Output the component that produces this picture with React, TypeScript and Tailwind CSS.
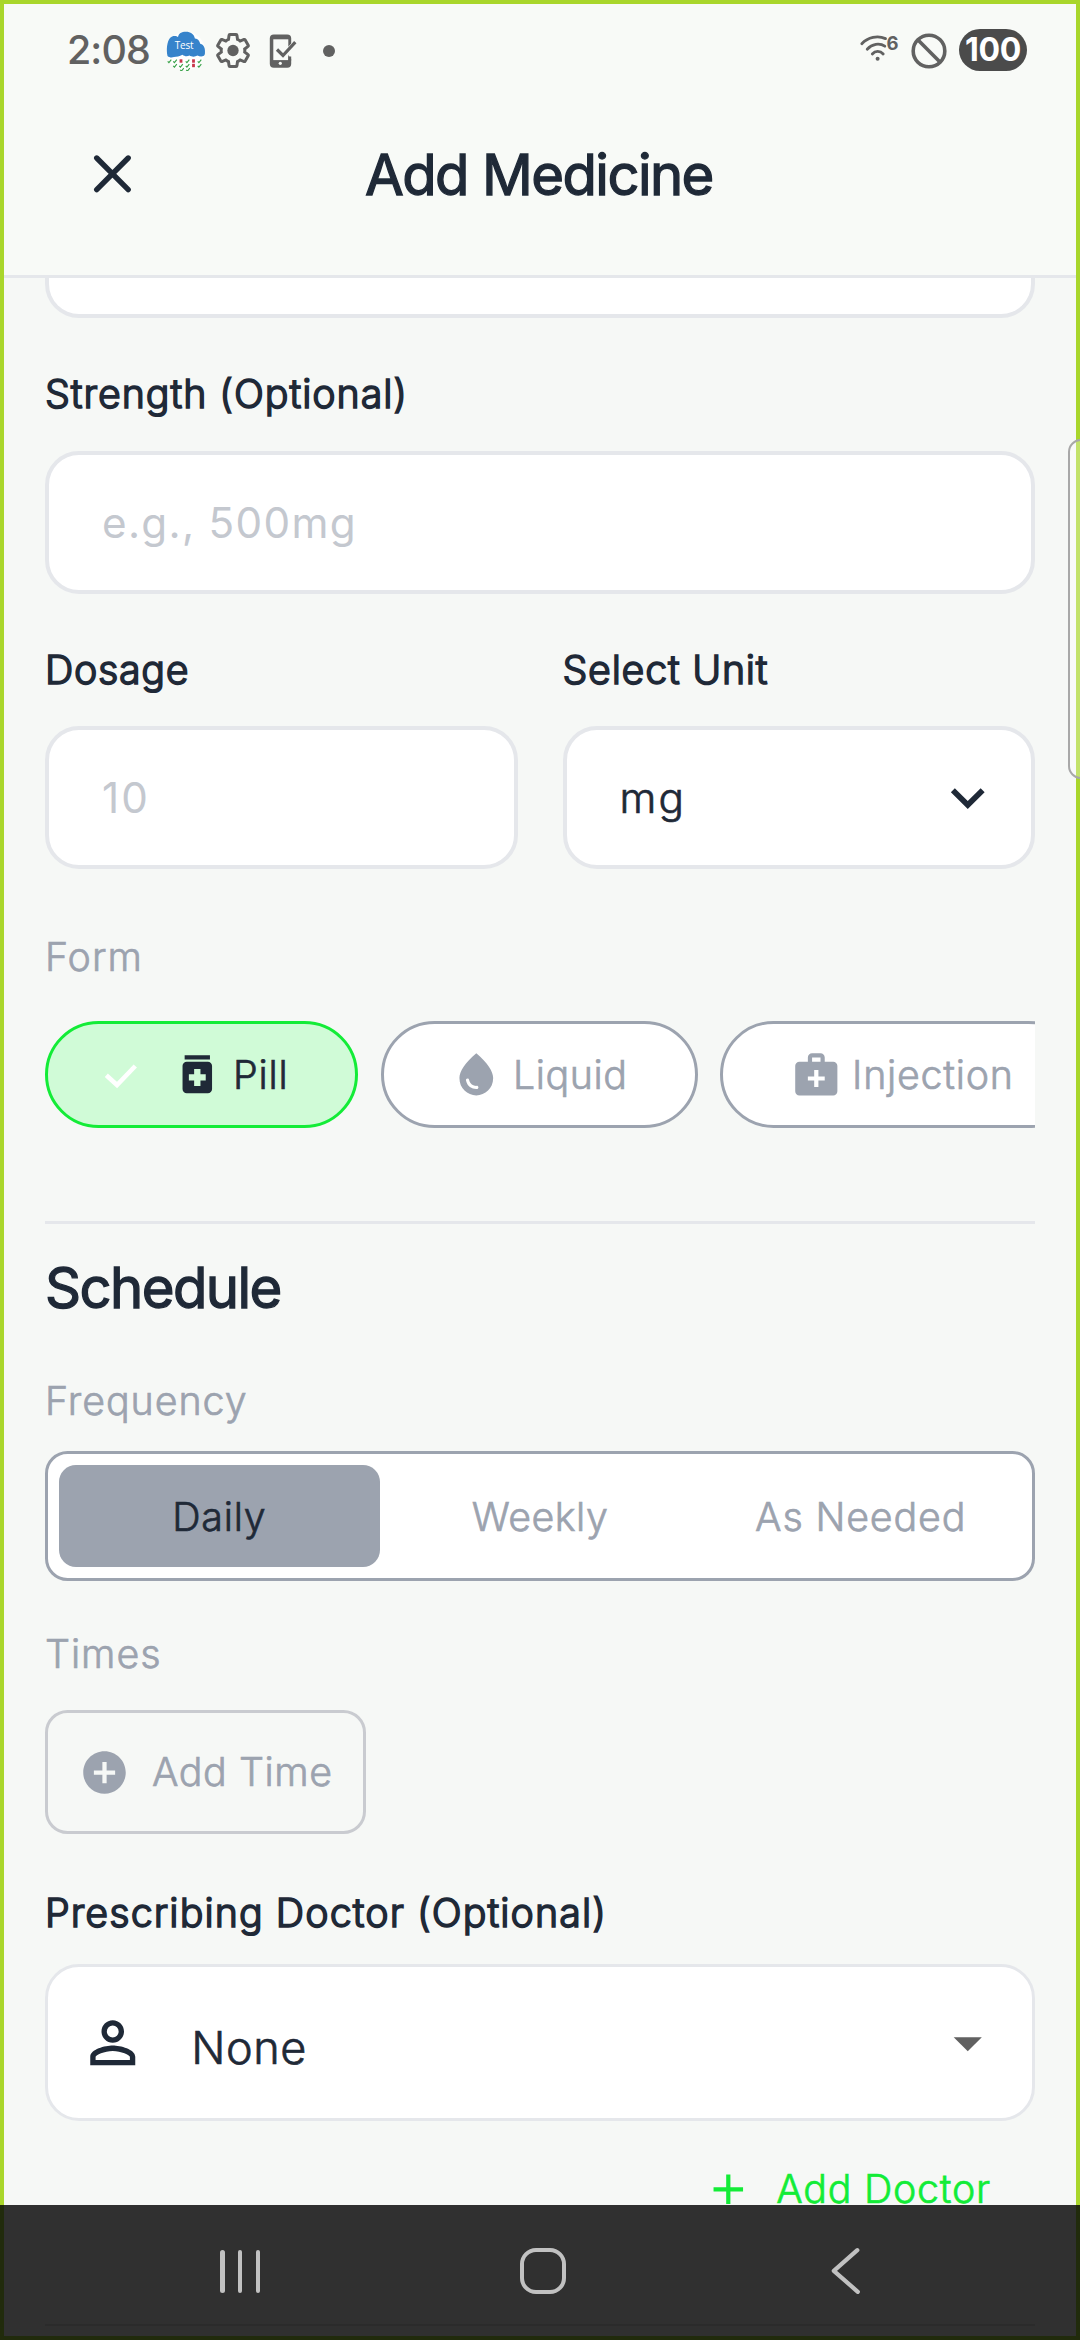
import type { ReactNode } from "react";
import {
  MdAdd,
  MdAddCircle,
  MdArrowDropDown,
  MdKeyboardArrowDown,
  MdMedicalServices,
  MdMedication,
  MdPersonOutline,
  MdWaterDrop,
} from "react-icons/md";

function TestAppIcon() {
  const marks = [
    [169, 61.5, 0], [174.5, 61.5, 0], [180.5, 61.5, 1], [187, 61.5, 0], [193, 61.5, 1], [199, 61.5, 0],
    [174.5, 66, 0], [180.5, 66, 0], [187, 66, 0], [193, 66, 1], [199, 66, 0],
    [181.5, 70, 0], [187.5, 70, 0],
  ];
  return (
    <svg className="h-10 w-10 shrink-0" viewBox="165.5 31.5 40 40">
      <circle cx="185.5" cy="51.5" r="19.2" fill="#fff" />
      <path
        d="M167 56.5C165.6 50 166.6 42 169.5 38.6C171.5 36 176 36 177.5 37.6C178 34 181 32.2 185.5 32.2C190 32.2 193.6 34.4 194.4 39C198.6 39.4 198.6 42 200 44.4C203.6 44.8 205 49 204.4 54.5C203.6 57.6 199.5 57.4 197 56C194.5 57.6 191 57.4 189 56C186.5 57.2 184 56.8 182 55.2C179 57.2 176 56.8 173.5 57.6C171 58.4 168.5 57.9 167 56.5Z"
        fill="#3683cb"
      />
      <text x="174.2" y="49.2" fontSize="10" fill="#fff" fontFamily="Open Sans, sans-serif" textLength="19">
        Test
      </text>
      {marks.map(([x, y, red], i) =>
        red ? (
          <rect key={i} x={x - 1.4} y={y - 1.7} width="2.8" height="3.4" fill="#c9364b" />
        ) : (
          <path key={i} d={`M${x - 1.8} ${y + 0.4}l1.2 1.2l2.4 -3`} fill="none" stroke="#3aa24a" strokeWidth="1.1" />
        ),
      )}
    </svg>
  );
}

function GearIcon() {
  return (
    <svg className="h-[35px] w-[34px] shrink-0" viewBox="1.2 1 21.6 22" preserveAspectRatio="none">
      <path
        d="M19.43 12.98c.04-.32.07-.64.07-.98 0-.34-.03-.66-.07-.98l2.11-1.65c.19-.15.24-.42.12-.64l-2-3.46c-.09-.16-.26-.25-.44-.25-.06 0-.12.01-.17.03l-2.49 1c-.52-.4-1.08-.73-1.69-.98l-.38-2.65C14.46 2.18 14.25 2 14 2h-4c-.25 0-.46.18-.49.42l-.38 2.65c-.61.25-1.17.59-1.69.98l-2.49-1c-.06-.02-.12-.03-.18-.03-.17 0-.34.09-.43.25l-2 3.46c-.13.22-.07.49.12.64l2.11 1.65c-.04.32-.07.65-.07.98 0 .33.03.66.07.98l-2.11 1.65c-.19.15-.24.42-.12.64l2 3.46c.09.16.26.25.44.25.06 0 .12-.01.17-.03l2.49-1c.52.4 1.08.73 1.69.98l.38 2.65c.03.24.24.42.49.42h4c.25 0 .46-.18.49-.42l.38-2.65c.61-.25 1.17-.59 1.69-.98l2.49 1c.06.02.12.03.18.03.17 0 .34-.09.43-.25l2-3.46c.12-.22.07-.49-.12-.64l-2.11-1.65z"
        fill="none"
        stroke="#616161"
        strokeWidth="1.9"
      />
      <circle cx="12" cy="12" r="3.6" fill="#616161" />
    </svg>
  );
}

function PhoneCheckIcon() {
  return (
    <svg className="h-[34px] w-[28px] shrink-0" viewBox="268 34.5 28 34">
      <rect x="268.8" y="35" width="21.4" height="33.3" rx="4" fill="#616161" />
      <path d="M272.3 39.8h15v20.8h-15z" fill="#f8faf7" />
      <path d="M284 50.5L296 38v16l-5.8 6z" fill="#f8faf7" />
      <path d="M276 50l6 6L294.3 42.6" fill="none" stroke="#616161" strokeWidth="3.2" />
      <path d="M287.3 57h2.9v4h-2.9z" fill="#616161" />
      <circle cx="279.3" cy="63.8" r="1.6" fill="#f8faf7" />
    </svg>
  );
}

function WifiIcon() {
  return (
    <svg className="h-[32px] w-[40px] shrink-0" viewBox="859 32 40 32">
      <g fill="none" stroke="#616161" strokeWidth="2.8" strokeLinecap="round">
        <path d="M861.8 43.8C868 37.2 877.5 35.2 885.5 38.6" />
        <path d="M867.2 49.2C872 43.8 879.5 42.6 884.8 46.2" />
        <path d="M872.3 54C875.2 50.6 880.2 50.6 883.2 54" />
      </g>
      <circle cx="877.6" cy="58.8" r="2" fill="#616161" />
      <text x="886.6" y="49.5" fontSize="18.5" fontWeight="700" fill="#616161" fontFamily="Inter, sans-serif">
        6
      </text>
    </svg>
  );
}

function StatusBar() {
  return (
    <div className="flex h-[77px] items-center pt-[24px] pl-[67px]">
      <span className="-mt-[2px] w-[99px] text-[39.4px] leading-[48px] font-medium tracking-[-0.9px] text-[#616161]">2:08</span>
      <TestAppIcon />
      <div className="ml-[10px]"><GearIcon /></div>
      <div className="ml-[18.5px]"><PhoneCheckIcon /></div>
      <span className="ml-[26px] size-[12px] rounded-full bg-[#616161]" />
      <div className="flex-1" />
      <div className="-mt-[5px]"><WifiIcon /></div>
      <svg className="ml-[12px] h-9 w-9 shrink-0" viewBox="0 0 36 36" fill="none" stroke="#616161" strokeWidth="3.6">
        <circle cx="18" cy="18" r="15.8" />
        <path d="M6.8 6.8L29.2 29.2" />
      </svg>
      <div className="-mt-px mr-[53px] ml-[12px] flex h-[42px] w-[68px] items-center justify-center rounded-full bg-[#4b4b4b] text-[32px] font-bold tracking-[-0.3px] text-white">
        100
      </div>
    </div>
  );
}

function Header() {
  return (
    <header className="flex h-[201px] items-center border-b-[3px] border-[#e5e7eb] pl-[92px]">
      <svg className="mb-[5px] h-[42px] w-[42px]" viewBox="0 0 42 42" fill="none" stroke="#1f2937" strokeWidth="5.4" strokeLinecap="round">
        <path d="M4.7 5L36.2 36.6M36.2 5L4.7 36.6" />
      </svg>
      <h1 className="-mt-[2px] ml-[231px] text-[56.25px] leading-[68px] tracking-[-1.6px] whitespace-nowrap text-[#1f2937] [-webkit-text-stroke:1.3px_#1f2937]">
        Add Medicine
      </h1>
    </header>
  );
}

function FieldLabel({ className, children }: { className: string; children: ReactNode }) {
  return (
    <div className={`text-[39.375px] leading-[48px] font-light whitespace-nowrap text-[#1f2937] [-webkit-text-stroke:1.6px_#1f2937] ${className}`}>
      {children}
    </div>
  );
}

function Muted({ className, children }: { className: string; children: ReactNode }) {
  return (
    <div className={`text-[39.375px] leading-[48px] font-light whitespace-nowrap text-[#9ca3af] [-webkit-text-stroke:0.7px_currentColor] ${className}`}>
      {children}
    </div>
  );
}

const box = "flex h-[143px] items-center rounded-[34px] border-4 border-[#e5e7eb] bg-white text-[42.188px] leading-[50px]";
const chip = "flex h-[107px] shrink-0 items-center rounded-full border-[3px]";
const chipText = "text-[39.375px] leading-[48px] font-light [-webkit-text-stroke:0.7px_currentColor]";

export default function App() {
  return (
    <div className="relative flex h-[2340px] w-[1080px] flex-col overflow-hidden bg-[#f6f8f6] font-['Inter',sans-serif]">
      <div className="bg-[#f8faf7]">
        <StatusBar />
        <Header />
      </div>

      <main className="flex h-[1927px] flex-col overflow-hidden px-[45px]">
        <div className="h-[40px] shrink-0 rounded-b-[34px] border-x-4 border-b-4 border-[#e5e7eb] bg-white" />

        <FieldLabel className="mt-[52px] tracking-[0.95px]">Strength (Optional)</FieldLabel>
        <div className={`${box} mt-[33px] shrink-0 pl-[53px] tracking-[1.31px] text-[#c4c8cf]`}>e.g., 500mg</div>

        <div className="mt-[52px] grid grid-cols-2 gap-[45px]">
          <div>
            <FieldLabel className="tracking-[0.7px]">Dosage</FieldLabel>
            <div className={`${box} mt-[32px] pl-[53px] tracking-[2.2px] text-[#c4c8cf]`}>10</div>
          </div>
          <div>
            <FieldLabel className="tracking-[0.75px]">Select Unit</FieldLabel>
            <div className={`${box} mt-[32px] justify-between pr-[30px] pl-[53px] text-[#1f2937]`}>
              <span className="font-light tracking-[2.3px] [-webkit-text-stroke:0.7px_currentColor]">mg</span>
              <MdKeyboardArrowDown className="size-[67.5px]" />
            </div>
          </div>
        </div>

        <Muted className="mt-[64px] tracking-[1px]">Form</Muted>
        <div className="mt-[40px] flex shrink-0 gap-[22.5px] overflow-hidden">
          <div className={`${chip} w-[313px] border-[#13ec37] bg-[#d0fbd7] pl-[55px] text-[#1f2937]`}>
            <svg className="h-[28px] w-[36px]" viewBox="0 0 36 28" fill="none" stroke="#fff" strokeWidth="4.6">
              <path d="M3.3 14.3L14 24L32.3 5" />
            </svg>
            <MdMedication className="ml-[32.5px] size-[50.6px]" />
            <span className={`${chipText} ml-[11px] tracking-[0.8px]`}>Pill</span>
          </div>
          <div className={`${chip} w-[317px] border-[#9ca3af] bg-white pl-[67.5px] text-[#9ca3af]`}>
            <MdWaterDrop className="size-[50.6px]" />
            <span className={`${chipText} ml-[11.5px] tracking-[0.55px]`}>Liquid</span>
          </div>
          <div className={`${chip} w-[362px] border-[#9ca3af] bg-white pl-[67.5px] text-[#9ca3af]`}>
            <MdMedicalServices className="size-[50.6px]" />
            <span className={`${chipText} ml-[11px] tracking-[0.75px]`}>Injection</span>
          </div>
        </div>

        <div className="mt-[93px] h-[3px] shrink-0 bg-[#e5e7eb]" />

        <h2 className="mt-[30px] text-[56.25px] leading-[68px] tracking-[-1.6px] text-[#1f2937] [-webkit-text-stroke:1.3px_#1f2937]">
          Schedule
        </h2>

        <Muted className="mt-[55px] tracking-[0.93px]">Frequency</Muted>
        <div className="mt-[26px] grid h-[130px] shrink-0 grid-cols-3 rounded-[22.5px] border-[3px] border-[#9ca3af] bg-white p-[11px]">
          <div className={`${chipText} flex items-center justify-center rounded-[17px] bg-[#9ca3af] pt-[2px] tracking-[0.8px] text-[#1f2937]`}>Daily</div>
          <div className={`${chipText} flex items-center justify-center pt-[2px] tracking-[0.5px] text-[#9ca3af]`}>Weekly</div>
          <div className={`${chipText} flex items-center justify-center pt-[2px] tracking-[0.83px] text-[#9ca3af]`}>As Needed</div>
        </div>

        <Muted className="mt-[49px] tracking-[0.95px]">Times</Muted>
        <div className="mt-[32px] flex h-[124px] w-[321px] shrink-0 items-center rounded-[22.5px] border-[3px] border-[#c9cbd0] pl-[30.5px] text-[#9ca3af]">
          <MdAddCircle className="size-[51px]" />
          <span className={`${chipText} ml-[22.5px] tracking-[0.55px] whitespace-nowrap`}>Add Time</span>
        </div>

        <FieldLabel className="mt-[55px] tracking-[1.08px]">Prescribing Doctor (Optional)</FieldLabel>
        <div className="mt-[27px] flex h-[157px] shrink-0 items-center rounded-[34px] border-[3px] border-[#e5e7eb] bg-white pr-[31px] pl-[30.7px] text-[#1f2937]">
          <MdPersonOutline className="size-[67.5px]" />
          <span className="mt-[10px] ml-[45px] flex-1 text-[45px] leading-[54px] font-light tracking-[0.6px] [-webkit-text-stroke:0.7px_currentColor]">None</span>
          <MdArrowDropDown className="size-[67.5px] text-[#616161]" />
        </div>

        <div className="mt-[43px] flex shrink-0 items-center justify-end pr-[44px] text-[#13ec37]">
          <MdAdd className="size-[50.6px]" />
          <span className={`${chipText} ml-[22.5px] tracking-[0.75px] whitespace-nowrap`}>Add Doctor</span>
        </div>
      </main>

      <div className="pointer-events-none absolute inset-0 border-4 border-[#a9d62b]" />
      <div className="absolute top-[439px] -right-[14px] h-[340px] w-[26px] rounded-[13px] border-2 border-[#a8a8a8] bg-white/30" />

      <nav className="relative flex h-[135px] flex-col border-x-4 border-b-4 border-[#212b0c] bg-[#303030]">
        <div className="flex h-[119px] items-center pt-[13px] text-[#c1c1c1]">
          <div className="ml-[216px] flex h-[43px] w-[40px] justify-between">
            <span className="w-[4.5px] rounded-full bg-current" />
            <span className="w-[4.5px] rounded-full bg-current" />
            <span className="w-[4.5px] rounded-full bg-current" />
          </div>
          <div className="ml-[259.5px] size-[46px] rounded-[16px] border-4 border-current" />
          <svg className="ml-[264px] h-[48px] w-[32px]" viewBox="0 0 32 48" fill="none" stroke="currentColor" strokeWidth="4.2" strokeLinecap="round" strokeLinejoin="round">
            <path d="M27.3 3.2L3.8 23.8L27.8 44.8" />
          </svg>
        </div>
        <div className="mx-[41px] h-[2px] bg-[#2b2b2b]" />
      </nav>
    </div>
  );
}
